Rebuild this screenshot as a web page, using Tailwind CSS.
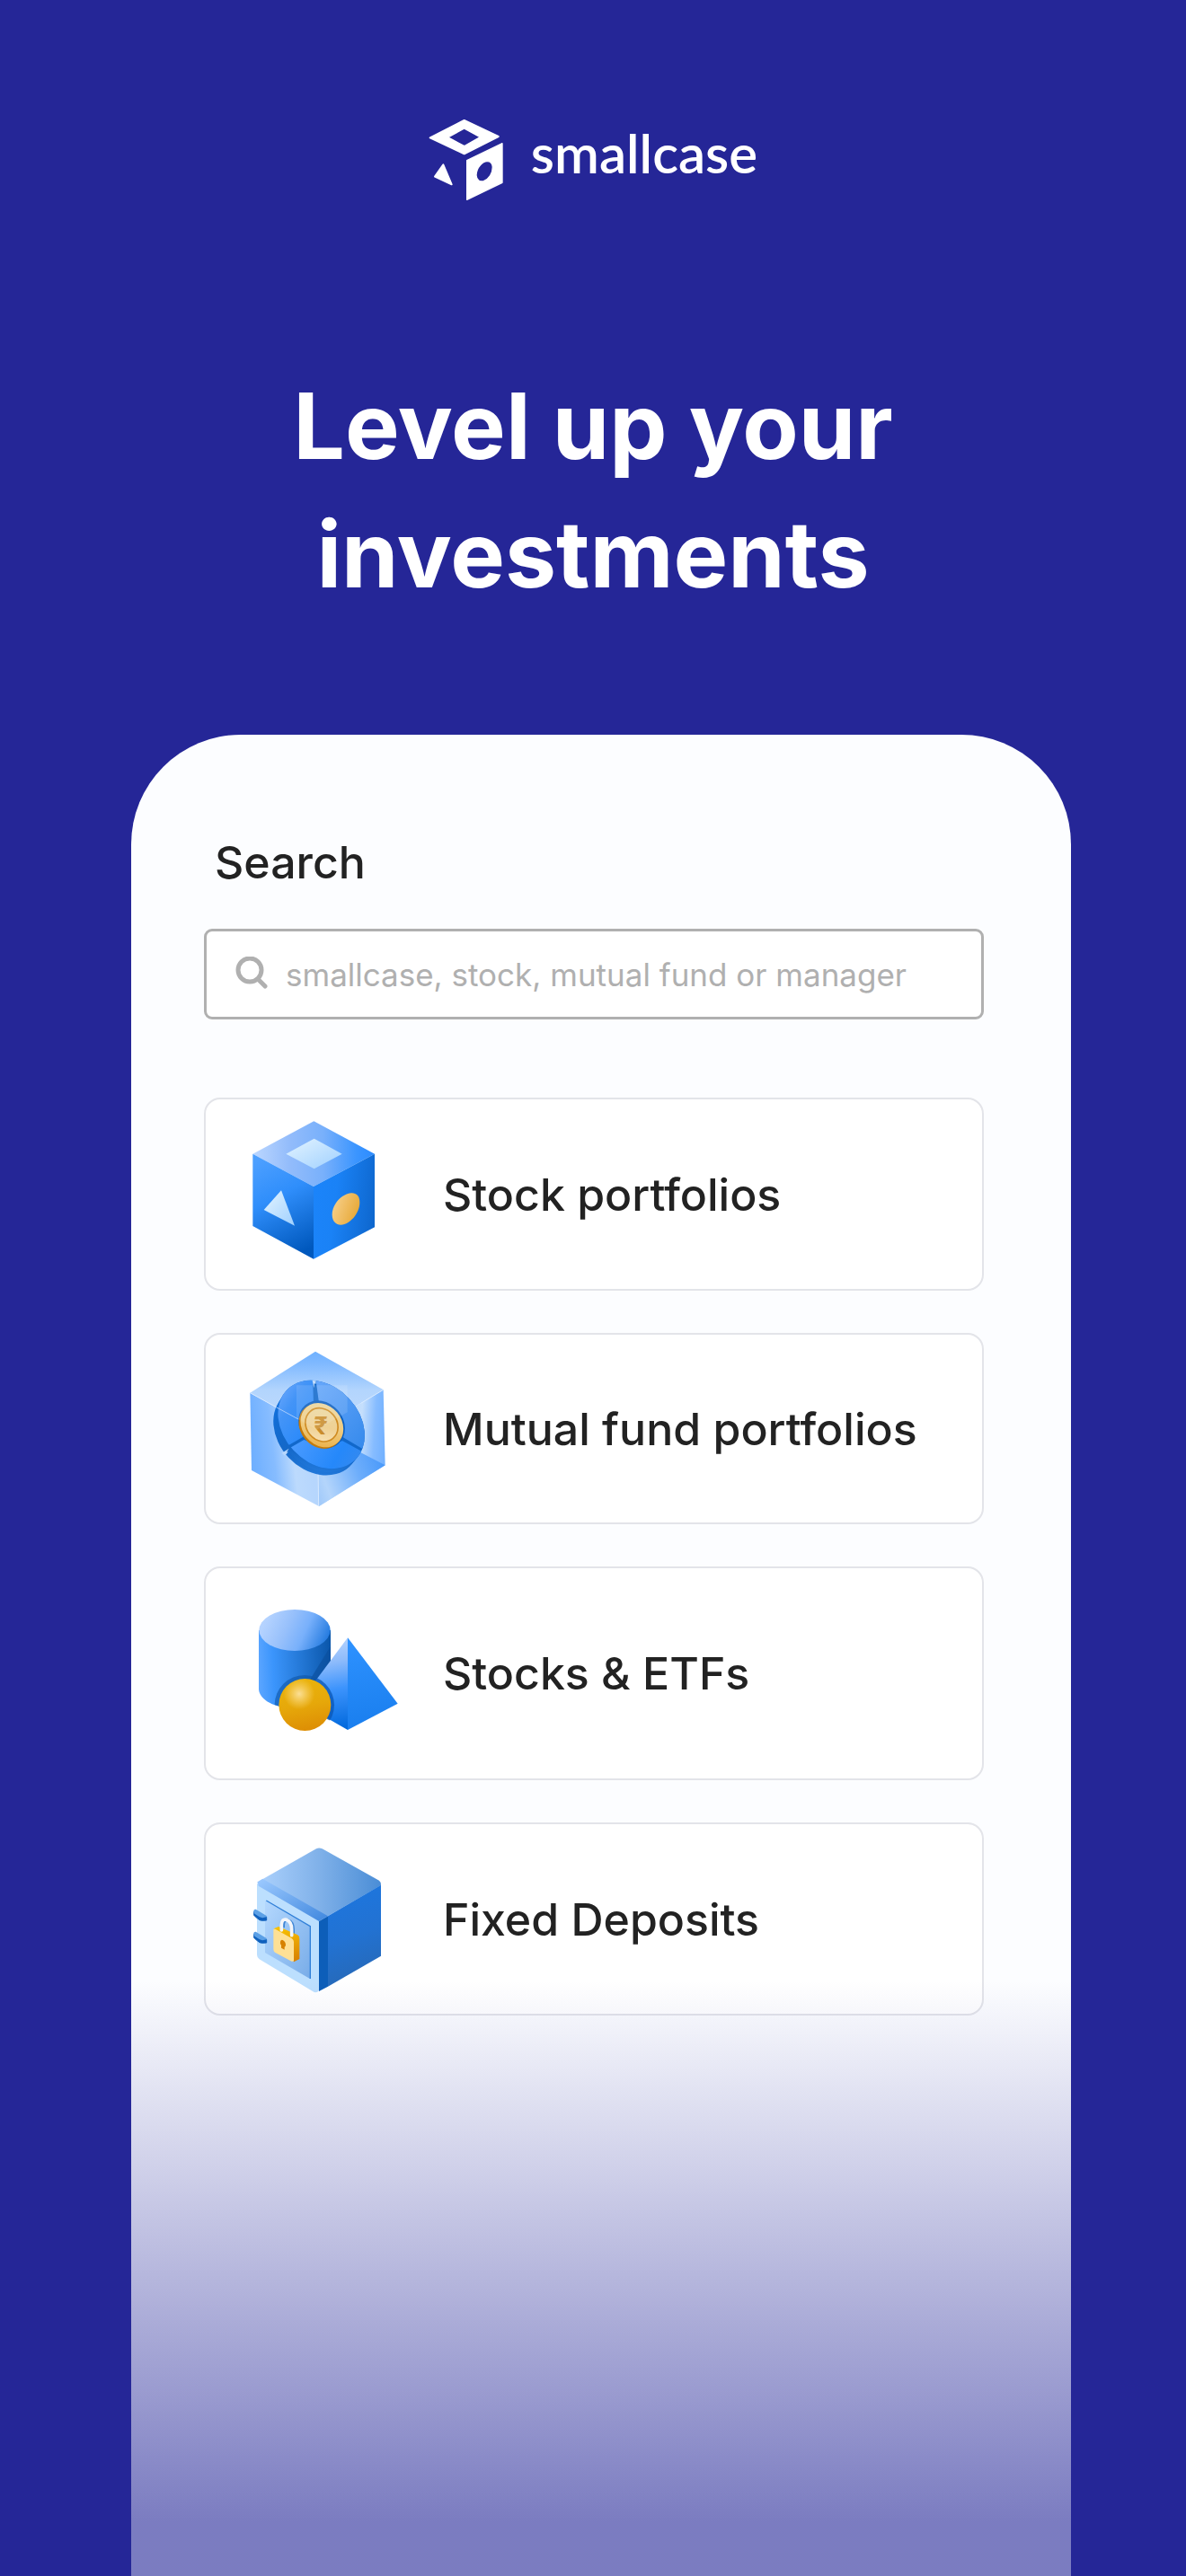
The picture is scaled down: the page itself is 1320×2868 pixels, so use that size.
<!DOCTYPE html>
<html lang="en">
<head>
  <meta charset="UTF-8">
  <meta name="viewport" content="width=device-width, initial-scale=1.0">
  <title>smallcase</title>
  <script src="https://cdn.jsdelivr.net/npm/@tailwindcss/browser@4"></script>
</head>
<body class="flex min-h-screen flex-col bg-[#252697] font-['Inter',sans-serif] text-[#222222]">

  <!-- Brand + headline -->
  <header class="flex flex-col items-center pt-[132px] text-white">
    <a href="/" class="flex items-start gap-[30px]">
      <svg class="h-[92px] w-[84px]" viewBox="54 69 252 276" fill="currentColor" aria-hidden="true">
        <path fill-rule="evenodd" stroke="currentColor" stroke-width="6" stroke-linejoin="round" d="M173 75 287 129 173 187 59 133ZM173 101 117 132 173 162 228 131Z"/>
        <path fill-rule="evenodd" stroke="currentColor" stroke-width="4" stroke-linejoin="round" d="M182 209 300 152V283L182 340ZM250 212C236 211 214 230 213 258C214 276 226 281 238 278C256 272 268 252 268 231C267 216 260 212 250 212Z"/>
        <path stroke="currentColor" stroke-width="6" stroke-linejoin="round" d="M103 223 131 289 75 263Z"/>
      </svg>
      <span class="font-['Lato',sans-serif] text-[60px] leading-[76px] font-semibold">smallcase</span>
    </a>
    <h1 class="mt-[179px] text-center text-[102px] leading-[143px] font-bold">Level up your<br>investments</h1>
  </header>

  <!-- Phone panel -->
  <main class="relative mt-[129px] mr-[128px] ml-[146px] flex-1 overflow-hidden rounded-t-[122px] bg-[#fcfdff] pt-[112px] pr-[97px] pb-[624px] pl-[81px]">
    <label for="search" class="block pl-3 text-[50px] leading-[60px] font-medium">Search</label>

    <div class="mt-11 flex h-[101px] items-center gap-5 rounded-[9px] border-3 border-[#b0b0b0] bg-white pr-6 pl-8 text-[#b0b0b0]">
      <svg class="h-10 w-9 shrink-0" viewBox="0 0 36 40" fill="none" stroke="currentColor" stroke-width="5" stroke-linecap="round" aria-hidden="true">
        <circle cx="16" cy="15" r="13"/>
        <path d="M25 25 33 33"/>
      </svg>
      <input id="search" type="text" placeholder="smallcase, stock, mutual fund or manager" class="min-w-0 flex-1 bg-transparent text-[35px] leading-[44px] outline-none placeholder:text-[#b0b0b0]">
    </div>

    <nav class="mt-[87px] flex flex-col gap-[47px] text-[50px] leading-[60px] font-medium">
      <a href="#stock-portfolios" class="flex min-h-[215px] items-center gap-11 rounded-[18px] border-2 border-[#e3e4e9] bg-white px-10">
        <svg class="h-44 w-[180px] shrink-0" viewBox="147 94 540 528" aria-hidden="true">
          <defs>
            <linearGradient id="cubeTop" x1="0" y1=".5" x2="1" y2=".5"><stop offset="0" stop-color="#bcd7ff"/><stop offset=".3" stop-color="#93bcfb"/><stop offset=".58" stop-color="#78b0fb"/><stop offset=".85" stop-color="#3b95ff"/><stop offset="1" stop-color="#2c8cff"/></linearGradient>
            <linearGradient id="cubeLeft" x1=".3" y1="0" x2=".6" y2="1"><stop offset="0" stop-color="#4c9fff"/><stop offset=".4" stop-color="#2f8efb"/><stop offset="1" stop-color="#0058bd"/></linearGradient>
            <linearGradient id="cubeRight" x1="0" y1=".4" x2="1" y2=".6"><stop offset="0" stop-color="#1b84fa"/><stop offset=".35" stop-color="#1a82f6"/><stop offset="1" stop-color="#0e67ce"/></linearGradient>
            <linearGradient id="cubeGlass" x1="0" y1="0" x2="1" y2="1"><stop offset="0" stop-color="#e4f4ff"/><stop offset="1" stop-color="#9fd0ff"/></linearGradient>
            <linearGradient id="cubeGold" x1="0" y1=".3" x2="1" y2=".7"><stop offset="0" stop-color="#f7d08b"/><stop offset="1" stop-color="#e6a632"/></linearGradient>
          </defs>
          <path fill="url(#cubeTop)" d="M388 113 591 222 387 331 184 222Z"/>
          <path fill="url(#cubeLeft)" d="M184 222 387 331V573L184 463Z"/>
          <path fill="url(#cubeRight)" d="M387 331 591 222V467L387 573Z"/>
          <path fill="url(#cubeGlass)" d="M389 171 482 222 389 272 295 222Z"/>
          <path fill="url(#cubeGlass)" d="M279 344 324 462 221 409Z"/>
          <path fill="url(#cubeGold)" d="M513 353C482 355 449 390 449 425C449 448 462 459 478 459C510 457 541 419 541 384C541 362 529 352 513 353Z"/>
        </svg>
        <span>Stock portfolios</span>
      </a>

      <a href="#mutual-fund-portfolios" class="flex min-h-[213px] items-center gap-11 rounded-[18px] border-2 border-[#e3e4e9] bg-white px-10">
        <svg class="h-44 w-[180px] shrink-0" viewBox="147 82 540 528" aria-hidden="true">
          <defs>
            <linearGradient id="hexTop" x1=".5" y1="0" x2=".5" y2="1"><stop offset="0" stop-color="#6fb1ff"/><stop offset=".15" stop-color="#7fb9ff"/><stop offset=".5" stop-color="#b3d5fd"/><stop offset="1" stop-color="#c3dcfb"/></linearGradient>
            <linearGradient id="hexLeft" x1=".05" y1=".55" x2=".85" y2=".4"><stop offset="0" stop-color="#70b0ff"/><stop offset=".35" stop-color="#86bcff"/><stop offset=".7" stop-color="#bcdafd"/><stop offset="1" stop-color="#b6d6fd"/></linearGradient>
            <linearGradient id="hexRight" x1="1" y1=".6" x2=".1" y2=".5"><stop offset="0" stop-color="#70b0ff"/><stop offset=".2" stop-color="#86bcff"/><stop offset=".42" stop-color="#c5dffc"/><stop offset="1" stop-color="#a6cdfb"/></linearGradient>
            <linearGradient id="hexCorner" x1="1" y1=".4" x2="0" y2=".8"><stop offset="0" stop-color="#4798fa"/><stop offset=".4" stop-color="#6eaefb"/><stop offset=".85" stop-color="#b4d5fb"/><stop offset="1" stop-color="#a3cbfa"/></linearGradient>
            <linearGradient id="wheelFace" x1=".1" y1=".1" x2=".85" y2=".9"><stop offset="0" stop-color="#7bb0ff"/><stop offset=".45" stop-color="#4394f7"/><stop offset="1" stop-color="#2688fb"/></linearGradient>
            <linearGradient id="wheelFaceRight" x1="0" y1="0" x2="1" y2="1"><stop offset="0" stop-color="#68a8fb"/><stop offset="1" stop-color="#2f86ea"/></linearGradient>
            <linearGradient id="wheelLow" x1="0" y1="0" x2="1" y2=".3"><stop offset="0" stop-color="#4f9dff"/><stop offset=".7" stop-color="#2588fa"/><stop offset="1" stop-color="#3489ef"/></linearGradient>
            <linearGradient id="wheelSide" x1="0" y1="0" x2="1" y2="1"><stop offset="0" stop-color="#2a80e8"/><stop offset=".35" stop-color="#1170dc"/><stop offset=".7" stop-color="#1468c8"/><stop offset="1" stop-color="#2d87ec"/></linearGradient>
            <linearGradient id="coinRim" x1="0" y1="0" x2="1" y2="1"><stop offset="0" stop-color="#e8d9a8"/><stop offset=".5" stop-color="#f0cd83"/><stop offset="1" stop-color="#e8a93a"/></linearGradient>
            <linearGradient id="coinFace" x1="0" y1="0" x2="1" y2="1"><stop offset="0" stop-color="#ead9a4"/><stop offset=".55" stop-color="#efd194"/><stop offset="1" stop-color="#fbe6bd"/></linearGradient>
            <clipPath id="faceClip"><ellipse cx="413" cy="331" rx="163" ry="127" transform="rotate(47 413 331)"/></clipPath>
          </defs>
          <path fill="url(#hexTop)" d="M393 87 620 215 397 348 175 225Z"/>
          <path fill="url(#hexLeft)" d="M175 225 397 348 405 604 180 484Z"/>
          <path fill="url(#hexRight)" d="M397 348 620 215 626 467 405 604Z"/>
          <path fill="url(#hexCorner)" d="M397 348 626 467 405 604Z"/>
          <path stroke="#d7e9ff" stroke-width="3" d="M404 604 402 480M620 215 545 260M175 225 300 294"/>
          <!-- wheel -->
          <ellipse cx="397" cy="354" rx="161" ry="128" transform="rotate(47 397 354)" fill="url(#wheelSide)"/>
          <ellipse cx="405" cy="343" rx="162" ry="128" transform="rotate(47 405 343)" fill="url(#wheelSide)"/>
          <g clip-path="url(#faceClip)">
            <path fill="#1168cb" d="M230 170H590V520H230Z"/>
            <path fill="url(#wheelFace)" d="M384 170 387 265 352 372 278 415 230 400V170Z"/>
            <path fill="url(#wheelFaceRight)" d="M393 170 405 258 488 375 560 418 600 400V170Z"/>
            <path fill="url(#wheelLow)" d="M303 412 355 382 400 400 484 386 550 422 560 520H300Z"/>
          </g>
          <path fill="#c6dffd" d="M383 184 395 185 394 197 390 193 388 209Z"/>
          <path fill="#b7d7fd" d="M281 426 305 411 297 423 303 422 291 435Z"/>
          <path stroke="#a6cbfd" stroke-width="3" d="M262 273 345 318"/>
          <ellipse cx="414" cy="331" rx="85" ry="72" transform="rotate(50 414 331)" fill="#0c5fc0"/>
          <!-- coin -->
          <ellipse cx="410" cy="337" rx="80" ry="67" transform="rotate(50 410 337)" fill="#c47b0c"/>
          <ellipse cx="415" cy="333" rx="79" ry="66" transform="rotate(50 415 333)" fill="url(#coinRim)"/>
          <ellipse cx="414" cy="332" rx="59" ry="51" transform="rotate(50 414 332)" fill="url(#coinFace)" stroke="#cf8b22" stroke-width="5"/>
          <text x="411" y="364" text-anchor="middle" class="font-['Inter',sans-serif] text-[82px] font-bold" fill="#c98c2c">₹</text>
          <path fill="#fff" fill-opacity=".12" d="M397 348 500 290V200H330V310Z"/>
        </svg>
        <span>Mutual fund portfolios</span>
      </a>

      <a href="#stocks-etfs" class="flex min-h-[238px] items-center gap-11 rounded-[18px] border-2 border-[#e3e4e9] bg-white px-10">
        <svg class="h-44 w-[180px] shrink-0" viewBox="147 117 540 528" aria-hidden="true">
          <defs>
            <linearGradient id="cylBody" x1="0" y1=".5" x2="1" y2=".45"><stop offset="0" stop-color="#5aa5ff"/><stop offset=".2" stop-color="#3b95fc"/><stop offset=".6" stop-color="#2377d5"/><stop offset="1" stop-color="#0b57ab"/></linearGradient>
            <linearGradient id="cylTop" x1=".05" y1=".4" x2="1" y2=".65"><stop offset="0" stop-color="#b5d3ff"/><stop offset=".35" stop-color="#97c0fb"/><stop offset=".62" stop-color="#78b0fb"/><stop offset="1" stop-color="#1f78de"/></linearGradient>
            <linearGradient id="pyrLeft" x1=".75" y1="0" x2=".85" y2="1"><stop offset="0" stop-color="#b5d4ff"/><stop offset=".25" stop-color="#8fbcfb"/><stop offset=".55" stop-color="#3d94fd"/><stop offset="1" stop-color="#0068dc"/></linearGradient>
            <linearGradient id="pyrRight" x1=".3" y1="0" x2=".4" y2="1"><stop offset="0" stop-color="#2e92ff"/><stop offset="1" stop-color="#197eee"/></linearGradient>
            <linearGradient id="ballBase" x1=".4" y1="0" x2=".6" y2="1"><stop offset="0" stop-color="#eab30c"/><stop offset=".5" stop-color="#e6a80a"/><stop offset="1" stop-color="#dd8d04"/></linearGradient>
            <radialGradient id="ballLight" cx=".39" cy=".29" r=".3"><stop offset="0" stop-color="#fbdf95"/><stop offset="1" stop-color="#fbd97a" stop-opacity="0"/></radialGradient>
            <clipPath id="cylClip"><path d="M204 237V435C207 471 258 497 323 497 390 497 440 470 444 435V237Z"/></clipPath>
            <clipPath id="pyrClip"><path d="M501 262 668 482 501 570 330 480Z"/></clipPath>
          </defs>
          <path fill="url(#cylBody)" d="M204 237V435C207 471 258 497 323 497 390 497 440 470 444 435V237Z"/>
          <g clip-path="url(#cylClip)">
            <path fill="#0a4f9d" fill-opacity=".65" d="M444 290 370 410 420 430 444 400Z"/>
            <circle cx="357" cy="487" r="100" fill="#0e55a5" fill-opacity=".6"/>
          </g>
          <ellipse cx="324" cy="237" rx="119" ry="69" fill="url(#cylTop)"/>
          <path fill="url(#pyrLeft)" d="M501 262V570L340 478Z"/>
          <path fill="url(#pyrRight)" d="M501 262 668 482 501 570Z"/>
          <circle cx="357" cy="487" r="99" fill="#0a55b4" fill-opacity=".75" clip-path="url(#pyrClip)"/>
          <circle cx="358" cy="486" r="87" fill="url(#ballBase)"/>
          <circle cx="358" cy="486" r="87" fill="url(#ballLight)"/>
        </svg>
        <span>Stocks &amp; ETFs</span>
      </a>

      <a href="#fixed-deposits" class="flex min-h-[215px] items-center gap-11 rounded-[18px] border-2 border-[#e3e4e9] bg-white px-10">
        <svg class="h-44 w-[180px] shrink-0" viewBox="147 82 540 528" aria-hidden="true">
          <defs>
            <linearGradient id="safeTop" x1="0" y1=".5" x2="1" y2=".5"><stop offset="0" stop-color="#add2fd"/><stop offset=".5" stop-color="#80b1e9"/><stop offset="1" stop-color="#4a8dd6"/></linearGradient>
            <linearGradient id="safeEdge" x1="0" y1="0" x2="1" y2="1"><stop offset="0" stop-color="#9dcaff"/><stop offset="1" stop-color="#3f87de"/></linearGradient>
            <linearGradient id="safeSide" x1=".4" y1="0" x2=".6" y2="1"><stop offset="0" stop-color="#1d76df"/><stop offset=".5" stop-color="#2272d2"/><stop offset="1" stop-color="#2768b5"/></linearGradient>
            <linearGradient id="safeDoor" x1="0" y1="0" x2="1" y2="1"><stop offset="0" stop-color="#b4d8fe"/><stop offset="1" stop-color="#78ace8"/></linearGradient>
            <linearGradient id="lockSide" x1=".4" y1="0" x2=".6" y2="1"><stop offset="0" stop-color="#f7c000"/><stop offset=".3" stop-color="#efae02"/><stop offset="1" stop-color="#d88200"/></linearGradient>
          </defs>
          <path fill="url(#safeTop)" d="M198 222 396 110Q405 105 416 110L606 216Q612 220 612 232L405 352Z"/>
          <path fill="url(#safeSide)" d="M435 335 612 231V468L435 570Z"/>
          <path fill="#0d5eb9" d="M405 352 435 335V570L405 586Z"/>
          <path fill="#bcdffe" d="M198 228Q198 222 206 232L405 350V584Q396 594 384 586L206 479Q198 474 198 464Z"/>
          <path fill="url(#safeEdge)" d="M200 221 217 210 435 335 405 352 203 234Z"/>
          <path fill="url(#safeDoor)" d="M225 283 376 370V545L225 457Z"/>
          <path fill="none" stroke="#2f7fd8" stroke-width="4" d="M229 283 376 369V544"/>
          <!-- hinges -->
          <path fill="#0f60bd" stroke="#0f60bd" stroke-width="3" stroke-linejoin="round" d="M188 320V332Q190 336 207 348Q212 351 230 349V338L210 334Z"/>
          <path fill="#5ba0e6" d="M187 318Q187 311 194 312L230 334V338Q215 343 207 338L190 327Q187 324 187 318Z"/>
          <path fill="#0f60bd" stroke="#0f60bd" stroke-width="3" stroke-linejoin="round" d="M188 395V407Q190 411 207 423Q212 426 230 424V413L210 409Z"/>
          <path fill="#5ba0e6" d="M187 393Q187 386 194 387L230 409V413Q215 418 207 413L190 402Q187 399 187 393Z"/>
          <!-- padlock -->
          <path fill="none" stroke="#3f86d6" stroke-width="8" d="M287 374V364Q288 345 303 348Q320 354 320 380V402"/>
          <path fill="url(#lockSide)" d="M254 377 270 370 334 398Q341 402 340 412V478L321 488Z"/>
          <path fill="#fee095" d="M253 380Q255 375 262 380L310 407Q321 413 321 422V483Q319 489 311 485L258 456Q253 453 253 446Z"/>
          <path fill="none" stroke="#f4f6fa" stroke-width="11" stroke-linecap="round" d="M280 382V364Q281 343 296 347Q314 354 314 380V399"/>
          <path fill="#d78200" d="M284 415Q294 420 294 432Q293 436 290 438V447L279 441V432Q274 427 276 420Q278 413 284 415Z"/>
        </svg>
        <span>Fixed Deposits</span>
      </a>
    </nav>

    <!-- Fade at the foot of the panel -->
    <div class="pointer-events-none absolute inset-x-0 bottom-0 h-[663px] bg-[linear-gradient(to_bottom,rgba(37,38,151,0),rgba(37,38,151,0.6)_91%)]"></div>
  </main>

</body>
</html>
